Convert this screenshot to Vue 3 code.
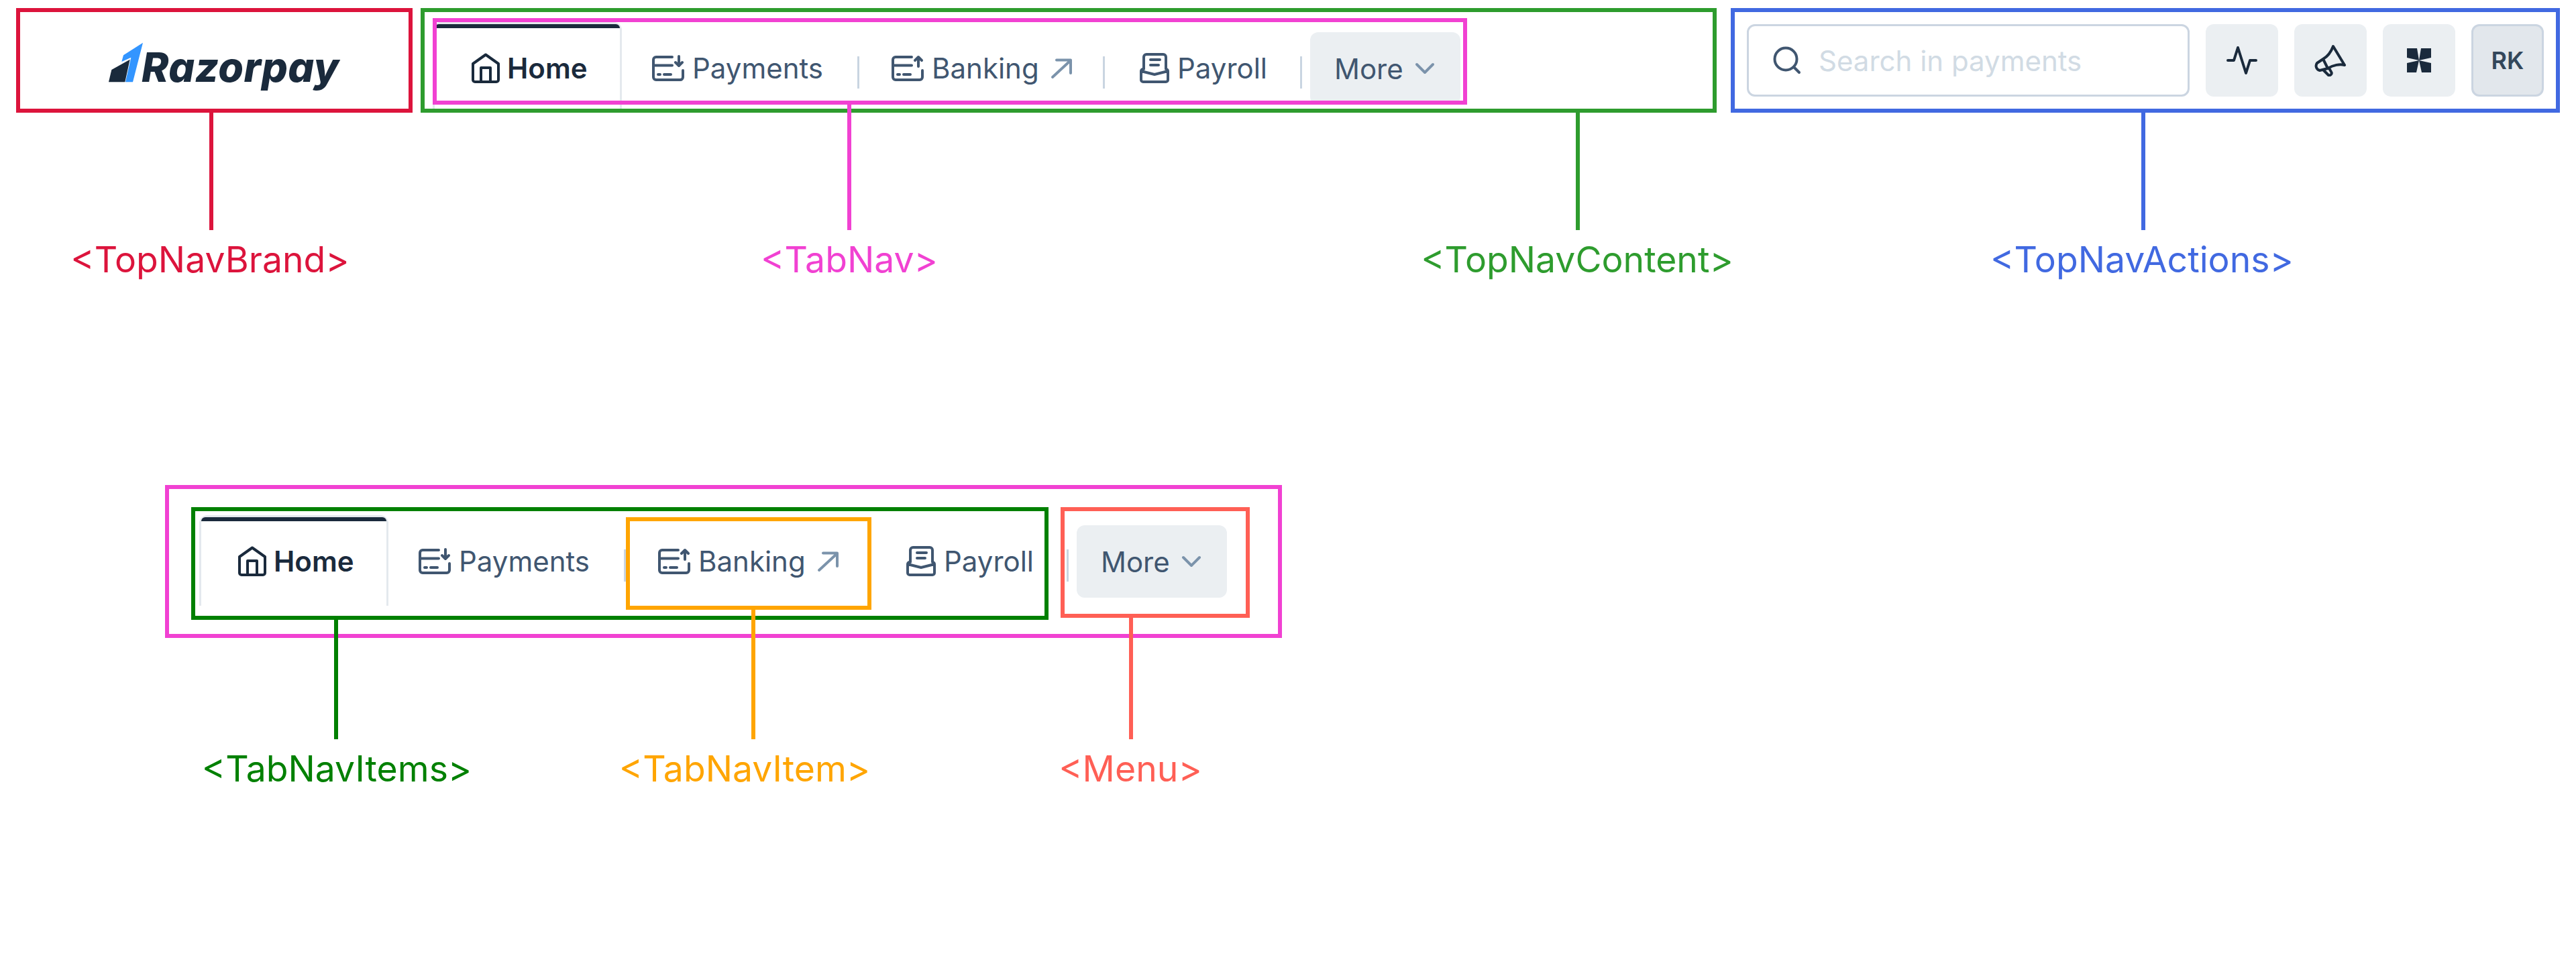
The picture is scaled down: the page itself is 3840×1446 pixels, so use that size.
<script setup>
const tabs = [
  { key: 'home', label: 'Home', icon: 'i-home', active: true },
  { key: 'pay', label: 'Payments', icon: 'i-pay' },
  { key: 'bank', label: 'Banking', icon: 'i-bank', external: true },
  { key: 'roll', label: 'Payroll', icon: 'i-roll' },
]
const navs = ['top', 'bottom']
const actions = ['i-pulse', 'i-mega', 'i-grid']

const marks = [
  { id: 1, c: '#dc143c', box: [24, 12, 591, 156], line: [312, 168, 175], name: '<TopNavBrand>', lab: [313, 387] },
  { id: 2, c: '#2e9c2e', box: [627, 12, 1932, 156], line: [2349, 168, 175], name: '<TopNavContent>', lab: [2351, 387] },
  { id: 3, c: '#f141d2', box: [645, 27, 1542, 129], line: [1263, 156, 187], name: '<TabNav>', lab: [1266, 387] },
  { id: 4, c: '#4169e1', box: [2580, 12, 1236, 156], line: [3192, 168, 175], name: '<TopNavActions>', lab: [3193, 387] },
  { id: 5, c: '#f141d2', box: [246, 723, 1665, 228] },
  { id: 6, c: '#008000', box: [285, 756, 1278, 168], line: [498, 924, 178], name: '<TabNavItems>', lab: [502, 1146] },
  { id: 7, c: '#ffa500', box: [933, 771, 366, 138], line: [1120, 909, 193], name: '<TabNavItem>', lab: [1110, 1146] },
  { id: 8, c: '#ff5f55', box: [1581, 756, 282, 165], line: [1683, 921, 181], name: '<Menu>', lab: [1685, 1146] },
]
</script>

<template>
  <div class="page">
    <svg class="defs" width="0" height="0" aria-hidden="true">
      <symbol id="i-home" viewBox="0 0 48 48"><path d="M5 17 24 3.5 43 17V41a3 3 0 0 1-3 3H8a3 3 0 0 1-3-3ZM17 44V23H31V44" /></symbol>
      <symbol id="i-pay" viewBox="0 0 48 48"><path d="M30 7H6a4 4 0 0 0-4 4V37a4 4 0 0 0 4 4H42a4 4 0 0 0 4-4V27M2 19.500H30M9 33H12M18 33H28M40 6V19M35 15 40 20 45 15" /></symbol>
      <symbol id="i-bank" viewBox="0 0 48 48"><path d="M30 7H6a4 4 0 0 0-4 4V37a4 4 0 0 0 4 4H42a4 4 0 0 0 4-4V27M2 19.500H30M9 33H12M18 33H28M40 21V7M35 12 40 7 45 12" /></symbol>
      <symbol id="i-roll" viewBox="0 0 48 48"><path d="M8 25V7a4 4 0 0 1 4-4H37a4 4 0 0 1 4 4V25M18 11H32M18 19H30M4 28 24 33 44 28M4 28V41a3 3 0 0 0 3 3H41a3 3 0 0 0 3-3V28a3 3 0 0 0-3-3M4 28a3 3 0 0 1 3-3" /></symbol>
      <symbol id="i-arrow" viewBox="0 0 48 48"><path d="M11 37 38 12M17 11.500H38V31" /></symbol>
      <symbol id="i-chev" viewBox="0 0 48 48"><path d="M12 18 24 30 36 18" /></symbol>
      <symbol id="i-search" viewBox="0 0 48 48"><circle cx="22" cy="22" r="16.500" /><path d="M34 34 42 42" /></symbol>
      <symbol id="i-pulse" viewBox="0 0 48 48"><path d="M3 24H12L18 5 30 43 36 24H45" /></symbol>
      <symbol id="i-mega" viewBox="0 0 48 48"><path d="M28 3 45 31C38 29 28 31 20 36L8 39C3 38 1 32 4 28L13 22C20 18 25 11 28 3ZM13 22 20 36M14 39 21 46C24 47 27 44 25 41L22 36" /></symbol>
      <symbol id="i-grid" viewBox="0 0 48 48"><path fill="#1a2a3c" stroke="none" d="M6 6H21L24 24 6 20ZM42 6H27L24 24 42 20ZM6 42V28L24 24 20 42ZM42 42V28L24 24 28 42Z" /></symbol>
    </svg>

    <template v-for="nav in navs" :key="nav">
      <div class="row" :class="nav">
        <div v-if="nav === 'top'" class="brand">
          <svg class="mark" viewBox="97 70 156 180" width="52" height="60" aria-hidden="true">
            <path fill="#1a2a3c" d="M97 248 110 193 192 147 170 248Z" />
            <path fill="#3395ff" d="M155 157 163 128 250 72 205 248H172L197 138Z" />
          </svg>
          <span class="brand-name">Razorpay</span>
        </div>

        <nav class="tabnav">
          <template v-for="(t, i) in tabs" :key="t.key">
            <div class="tab" :class="['tab-' + t.key, { active: t.active }]">
              <svg class="ico"><use :href="'#' + t.icon" /></svg>
              <span>{{ t.label }}</span>
              <svg v-if="t.external" class="ico soft ext"><use href="#i-arrow" /></svg>
            </div>
            <div v-if="i > 0" class="sep"></div>
          </template>
          <button class="more">
            <span>More</span>
            <svg class="ico soft chev"><use href="#i-chev" /></svg>
          </button>
        </nav>

        <div v-if="nav === 'top'" class="actions">
          <div class="search">
            <svg class="ico"><use href="#i-search" /></svg>
            <span>Search in payments</span>
          </div>
          <div v-for="a in actions" :key="a" class="act">
            <svg class="ico dark"><use :href="'#' + a" /></svg>
          </div>
          <div class="act avatar">RK</div>
        </div>
      </div>
    </template>

    <div class="notes">
      <template v-for="m in marks" :key="m.id">
        <div class="box" :style="{ left: m.box[0] + 'px', top: m.box[1] + 'px', width: m.box[2] + 'px', height: m.box[3] + 'px', borderColor: m.c }"></div>
        <div v-if="m.line" class="line" :style="{ left: m.line[0] + 'px', top: m.line[1] + 'px', height: m.line[2] + 'px', background: m.c }"></div>
        <div v-if="m.name" class="label" :style="{ left: m.lab[0] + 'px', top: m.lab[1] + 'px', color: m.c }">{{ m.name }}</div>
      </template>
    </div>
  </div>
</template>

<style>
html, body { margin: 0; background: #fff; }
</style>

<style scoped>
.page {
  position: relative;
  width: 3840px;
  height: 1446px;
  overflow: hidden;
  background: #fff;
  font-family: Inter, "Liberation Sans", sans-serif;
}
.defs { position: absolute; }
.row { display: flex; align-items: flex-start; }
.row.top { padding-top: 33px; }
.row.bottom { margin-top: 600px; padding-left: 297px; }

.brand {
  width: 645px;
  height: 135px;
  box-sizing: border-box;
  padding: 30px 0 0 162px;
  display: flex;
  align-items: flex-start;
}
.mark { flex: none; }
.brand-name {
  margin: 7px 0 0 -3px;
  font-size: 61px;
  line-height: 60px;
  font-weight: 800;
  font-style: italic;
  color: #1a2a3c;
  letter-spacing: 0.5px;
}

.tabnav { display: flex; align-items: flex-start; }
.tab {
  display: flex;
  flex: none;
  align-items: center;
  gap: 12px;
  height: 135px;
  box-sizing: border-box;
  padding-top: 3px;
  font-size: 42px;
  line-height: 48px;
  color: #405670;
}
.tab-pay { width: 351px; padding-left: 45px; }
.tab-bank { width: 363px; padding-left: 48px; }
.tab-roll { width: 291px; padding-left: 50px; gap: 10px; }
.tab .ico { stroke: #405670; }
.tab.active {
  position: relative;
  width: 282px;
  gap: 8px;
  padding: 0 0 0 52px;
  font-weight: 600;
  color: #1a2a3c;
  border: 3px solid #e4e9ee;
  border-bottom: 0;
  border-radius: 12px 12px 0 0;
}
.tab.active::before {
  content: "";
  position: absolute;
  left: 0;
  right: 0;
  top: 0;
  height: 6px;
  background: #1a2a3c;
  border-radius: 9px 9px 0 0;
}
.tab.active .ico { stroke: #1a2a3c; }
.ico {
  flex: none;
  width: 48px;
  height: 48px;
  fill: none;
  stroke: #405670;
  stroke-width: 4;
  stroke-linecap: round;
  stroke-linejoin: round;
}
.tab .ico.soft, .more .ico.soft { stroke: #7b93ab; }
.ico.ext { margin-left: -3px; }
.sep {
  flex: none;
  width: 3px;
  height: 48px;
  margin-top: 51px;
  background: #c9d5e1;
}
.more {
  display: flex;
  flex: none;
  align-items: center;
  gap: 8px;
  height: 108px;
  margin: 15px 0 0 12px;
  padding: 0 29px 0 36px;
  border: 0;
  border-radius: 12px;
  background: #ebeff2;
  font: inherit;
  font-size: 42px;
  color: #405670;
}

.actions {
  margin: 3px 48px 0 auto;
  display: flex;
  gap: 24px;
}
.search {
  width: 660px;
  height: 108px;
  box-sizing: border-box;
  padding-left: 33px;
  display: flex;
  align-items: center;
  gap: 23px;
  border: 3px solid #cbd5e1;
  border-radius: 12px;
  font-size: 42px;
  color: #d1dbe4;
}
.act {
  width: 108px;
  height: 108px;
  box-sizing: border-box;
  display: flex;
  align-items: center;
  justify-content: center;
  border-radius: 12px;
  background: #ebeff2;
}
.ico.dark { stroke: #1a2a3c; }
.avatar {
  border: 3px solid #cbd5e1;
  background: #e2e7ec;
  font-size: 36px;
  font-weight: 600;
  color: #33475b;
}

.notes { position: absolute; inset: 0; pointer-events: none; }
.box { position: absolute; box-sizing: border-box; border: 6px solid; }
.line { position: absolute; width: 6px; }
.label {
  position: absolute;
  transform: translate(-50%, -50%);
  white-space: nowrap;
  font-size: 53.5px;
  line-height: 1.2;
}
</style>
